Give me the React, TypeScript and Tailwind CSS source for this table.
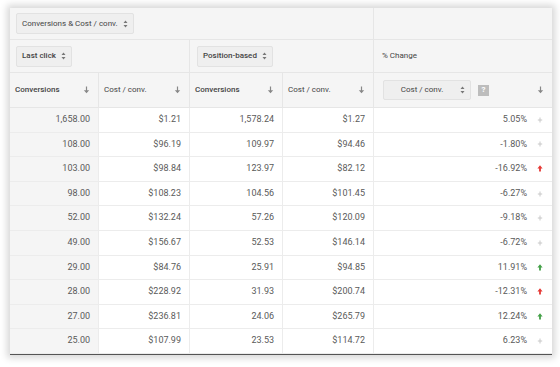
import React from 'react'

type Row = { a: string; b: string; c: string; d: string; pct: string; dir: 'flat' | 'up' | 'down' }

const ROWS: Row[] = [
  { a: '1,658.00', b: '$1.21',   c: '1,578.24', d: '$1.27',   pct: '5.05%',   dir: 'flat' },
  { a: '108.00',   b: '$96.19',  c: '109.97',   d: '$94.46',  pct: '-1.80%',  dir: 'flat' },
  { a: '103.00',   b: '$98.84',  c: '123.97',   d: '$82.12',  pct: '-16.92%', dir: 'down' },
  { a: '98.00',    b: '$108.23', c: '104.56',   d: '$101.45', pct: '-6.27%',  dir: 'flat' },
  { a: '52.00',    b: '$132.24', c: '57.26',    d: '$120.09', pct: '-9.18%',  dir: 'flat' },
  { a: '49.00',    b: '$156.67', c: '52.53',    d: '$146.14', pct: '-6.72%',  dir: 'flat' },
  { a: '29.00',    b: '$84.76',  c: '25.91',    d: '$94.85',  pct: '11.91%',  dir: 'up' },
  { a: '28.00',    b: '$228.92', c: '31.93',    d: '$200.74', pct: '-12.31%', dir: 'down' },
  { a: '27.00',    b: '$236.81', c: '24.06',    d: '$265.79', pct: '12.24%',  dir: 'up' },
  { a: '25.00',    b: '$107.99', c: '23.53',    d: '$114.72', pct: '6.23%',   dir: 'flat' },
]

const Caret = () => (
  <svg width="5" height="8" viewBox="0 0 5 8" className="shrink-0">
    <path d="M2.5 0.5 L4.5 3 H0.5 Z M2.5 7.5 L4.5 5 H0.5 Z" fill="#777" />
  </svg>
)

const SortArrow = () => (
  <svg width="7" height="8" viewBox="0 0 7 8" className="shrink-0">
    <path d="M3.5 0.5 V6" stroke="#888" strokeWidth="1.2" />
    <path d="M0.8 4.2 L3.5 7.3 L6.2 4.2 Z" fill="#888" />
  </svg>
)

const Trend = ({ dir }: { dir: Row['dir'] }) => {
  if (dir === 'flat')
    return (
      <svg width="6" height="6" viewBox="0 0 6 6" className="shrink-0">
        <path d="M3 0.5 V5.5 M0.8 3 H5.2" stroke="#c8c8c8" strokeWidth="1" />
      </svg>
    )
  const color = dir === 'up' ? '#43a047' : '#e53935'
  return (
    <svg width="6" height="7" viewBox="0 0 6 7" className="shrink-0">
      <path d="M3 0.3 L5.6 3.4 H3.9 V6.6 H2.1 V3.4 H0.4 Z" fill={color} />
    </svg>
  )
}

const Btn = ({ children, className = '' }: { children: React.ReactNode; className?: string }) => (
  <div className={`flex items-center gap-[5px] h-[21px] px-[5px] whitespace-nowrap bg-[#efefef] border border-[#e2e2e2] rounded-[2px] text-[8px] text-[#444] ${className}`}>
    {children}
  </div>
)

export default function App() {
  const cell = 'flex items-center justify-end pr-[8px] text-[9px] text-[#5a5a5a] border-b border-[#ececec]'
  return (
    <div className="w-[560px] h-[367px] bg-white pt-[8px] pl-[10px]" style={{ fontFamily: 'Roboto, "Liberation Sans", sans-serif' }}>
      <div className="w-[542px] bg-white shadow-[0_0_7px_3px_rgba(0,0,0,0.16)] border-b border-[#555]">
        <div className="grid grid-cols-[89px_91px_93px_91px_178px]">
          {/* row 1 */}
          <div className="col-span-4 h-[32px] bg-[#f5f5f5] border-b border-r border-[#e6e6e6] flex items-center pl-[6px]">
            <Btn>
              <span>Conversions &amp; Cost / conv.</span>
              <Caret />
            </Btn>
          </div>
          <div className="h-[32px] bg-[#f5f5f5] border-b border-[#e6e6e6]" />

          {/* row 2 */}
          <div className="col-span-2 h-[33px] bg-[#f5f5f5] border-b border-r border-[#e6e6e6] flex items-center pl-[6px]">
            <Btn className="font-medium">
              <span>Last click</span>
              <Caret />
            </Btn>
          </div>
          <div className="col-span-2 h-[33px] bg-[#f5f5f5] border-b border-r border-[#e6e6e6] flex items-center pl-[7px]">
            <Btn className="font-medium">
              <span>Position-based</span>
              <Caret />
            </Btn>
          </div>
          <div className="h-[33px] bg-[#f5f5f5] border-b border-[#e6e6e6] flex items-center pl-[8px] text-[8px] text-[#444]">
            % Change
          </div>

          {/* row 3 */}
          {['Conversions', 'Cost / conv.', 'Conversions', 'Cost / conv.'].map((h, i) => (
            <div
              key={i}
              className={`h-[35px] bg-[#f5f5f5] border-b border-r border-[#e6e6e6] flex items-center justify-between pl-[5px] pr-[8px] text-[8px] text-[#444] ${i % 2 === 0 ? 'font-medium' : ''}`}
            >
              <span>{h}</span>
              <SortArrow />
            </div>
          ))}
          <div className="h-[35px] bg-[#f5f5f5] border-b border-[#e6e6e6] flex items-center pl-[9px] pr-[8px]">
            <div className="flex items-center w-[88px] h-[20px] bg-[#efefef] border border-[#e2e2e2] rounded-[2px] text-[8px] text-[#444] pr-[5px]">
              <span className="flex-1 text-center">Cost / conv.</span>
              <Caret />
            </div>
            <div className="ml-[7px] w-[11px] h-[11px] bg-[#bdbdbd] text-white text-[8px] font-bold flex items-center justify-center">?</div>
            <div className="flex-1" />
            <SortArrow />
          </div>

          {/* data */}
          {ROWS.map((r, i) => (
            <React.Fragment key={i}>
              <div className={`${cell} h-[24.6px] bg-[#f5f5f5] border-r border-r-[#ececec]`}>{r.a}</div>
              <div className={`${cell} h-[24.6px] border-r border-r-[#ececec]`}>{r.b}</div>
              <div className={`${cell} h-[24.6px] border-r border-r-[#ececec]`}>{r.c}</div>
              <div className={`${cell} h-[24.6px] border-r border-r-[#ececec]`}>{r.d}</div>
              <div className={`${cell} h-[24.6px] gap-[10px] pr-[9px]`}>
                <span>{r.pct}</span>
                <Trend dir={r.dir} />
              </div>
            </React.Fragment>
          ))}
        </div>
      </div>
    </div>
  )
}
